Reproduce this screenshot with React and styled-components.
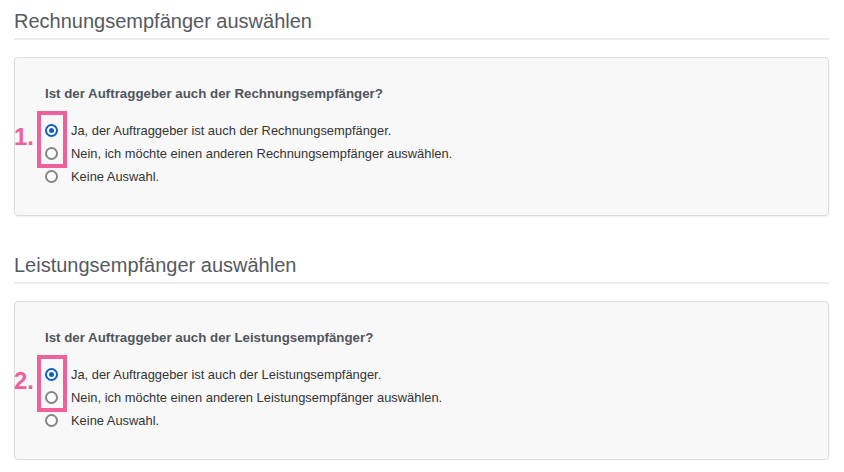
import styled, { createGlobalStyle } from "styled-components";

const sections = [
  {
    title: "Rechnungsempfänger auswählen",
    question: "Ist der Auftraggeber auch der Rechnungsempfänger?",
    marker: "1.",
    options: [
      "Ja, der Auftraggeber ist auch der Rechnungsempfänger.",
      "Nein, ich möchte einen anderen Rechnungsempfänger auswählen.",
      "Keine Auswahl.",
    ],
  },
  {
    title: "Leistungsempfänger auswählen",
    question: "Ist der Auftraggeber auch der Leistungsempfänger?",
    marker: "2.",
    options: [
      "Ja, der Auftraggeber ist auch der Leistungsempfänger.",
      "Nein, ich möchte einen anderen Leistungsempfänger auswählen.",
      "Keine Auswahl.",
    ],
  },
];

const GlobalStyle = createGlobalStyle`
  body {
    margin: 0;
    background: #fff;
    font-family: "Liberation Sans", Arial, sans-serif;
  }
`;

export default function App() {
  return (
    <>
      <GlobalStyle />
      <Page>
        {sections.map((section) => (
          <Section key={section.title}>
            <Heading>{section.title}</Heading>
            <Card>
              <Question>{section.question}</Question>
              <RadioList>
                <Highlight />
                <Marker>{section.marker}</Marker>
                {section.options.map((option, i) => (
                  <Option key={option}>
                    <Radio $checked={i === 0} />
                    <span>{option}</span>
                  </Option>
                ))}
              </RadioList>
            </Card>
          </Section>
        ))}
      </Page>
    </>
  );
}

const Page = styled.div`
  display: flex;
  flex-direction: column;
  gap: 38px;
  padding: 10px 15px 0 14px;
`;

const Section = styled.section`
  display: flex;
  flex-direction: column;
  gap: 17px;
`;

const Heading = styled.h2`
  margin: 0;
  padding-bottom: 6px;
  border-bottom: 2px solid #ececec;
  font-size: 20px;
  line-height: 22px;
  font-weight: normal;
  color: #555a5f;
`;

const Card = styled.div`
  background: #f8f8f8;
  border: 1px solid #dcdcdc;
  border-radius: 4px;
  box-shadow: 0 1px 2px rgba(0, 0, 0, 0.06);
  padding: 28px 30px 27px 30px;
`;

const Question = styled.div`
  font-size: 13.3px;
  line-height: 16px;
  font-weight: bold;
  color: #50555b;
  margin-bottom: 17px;
`;

const RadioList = styled.div`
  position: relative;
  display: flex;
  flex-direction: column;
`;

const Option = styled.label`
  display: flex;
  align-items: center;
  gap: 13px;
  height: 23px;
  font-size: 12.9px;
  color: #333;
`;

const Radio = styled.span`
  box-sizing: border-box;
  flex: none;
  width: 13px;
  height: 13px;
  border-radius: 50%;
  background: #fff;
  border: ${(p) => (p.$checked ? "2px solid #0f5fc8" : "2px solid #858585")};
  display: flex;
  align-items: center;
  justify-content: center;

  &::after {
    content: "";
    display: ${(p) => (p.$checked ? "block" : "none")};
    width: 5px;
    height: 5px;
    border-radius: 50%;
    background: #0f5fc8;
  }
`;

const Highlight = styled.div`
  position: absolute;
  left: -8px;
  top: -8px;
  width: 30px;
  height: 57px;
  box-sizing: border-box;
  border: 4px solid #f0609a;
  pointer-events: none;
`;

const Marker = styled.div`
  position: absolute;
  left: -31px;
  top: 6px;
  font-size: 24px;
  line-height: 24px;
  font-weight: bold;
  color: #f0609a;
`;
